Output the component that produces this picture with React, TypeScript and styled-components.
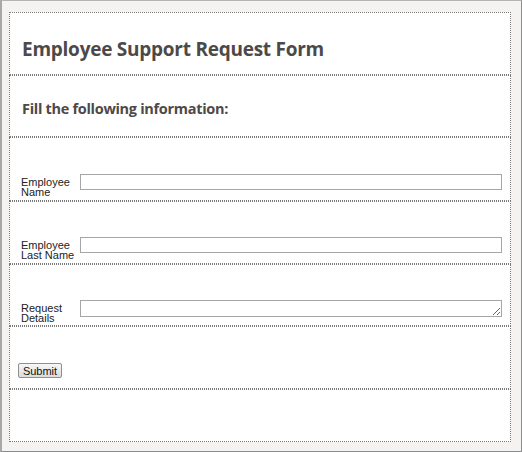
import styled, { createGlobalStyle } from 'styled-components';

const GlobalStyle = createGlobalStyle`
  html, body {
    margin: 0;
    padding: 0;
    background: #f4f3f1;
  }
`;

const Frame = styled.div`
  box-sizing: border-box;
  width: 522px;
  height: 452px;
  background: #f4f3f1;
  border-top: 1px solid #b4b4b4;
  border-left: 2px solid #a8a8a8;
  border-right: 1px solid #8c8c8c;
  border-bottom: 1px solid #8c8c8c;
  padding: 11px 10px 0 7px;
  font-family: 'Liberation Sans', Arial, sans-serif;
`;

const Panel = styled.form`
  display: flex;
  flex-direction: column;
  width: 502px;
  background: #fff;
  margin: 0;
`;

const Row = styled.div<{ $h: number; $pt: number; $pl?: number }>`
  box-sizing: border-box;
  height: ${(p) => p.$h}px;
  border: 1px dotted #7a7a7a;
  padding: ${(p) => p.$pt}px 0 0 ${(p) => p.$pl ?? 11}px;
`;

const Title = styled.h1`
  margin: 0;
  font-family: 'Open Sans', 'DejaVu Sans', sans-serif;
  font-weight: 700;
  font-size: 19px;
  letter-spacing: -0.25px;
  line-height: 24px;
  color: #4d4948;
  padding-left: 1px;
`;

const SubTitle = styled.h2`
  margin: 0;
  font-family: 'Open Sans', 'DejaVu Sans', sans-serif;
  font-weight: 700;
  font-size: 14.5px;
  letter-spacing: -0.3px;
  line-height: 20px;
  color: #4d4948;
  padding-left: 1px;
`;

const Field = styled.div`
  display: flex;
  align-items: flex-start;
`;

const Label = styled.label`
  width: 59px;
  margin-top: 3px;
  font-size: 11px;
  line-height: 10px;
  color: #222;
`;

const TextInput = styled.input`
  box-sizing: border-box;
  width: 422px;
  height: 16px;
  margin: 0;
  padding: 0 2px;
  border: 1px solid #a6a6a6;
  background: #fff;
  font: 11px 'Liberation Sans', Arial, sans-serif;
`;

const TextArea = styled.textarea`
  box-sizing: border-box;
  width: 422px;
  height: 17px;
  margin: 0;
  padding: 0 2px;
  border: 1px solid #a6a6a6;
  background: #fff;
  font: 11px 'Liberation Sans', Arial, sans-serif;
`;

const SubmitButton = styled.button`
  display: block;
  box-sizing: border-box;
  width: 44px;
  height: 15px;
  padding: 0;
  border: 1px solid #8e8e8e;
  border-radius: 2px;
  background: linear-gradient(#f7f7f7, #dcdcdc);
  font: 11px 'Liberation Sans', Arial, sans-serif;
  line-height: 12px;
  color: #111;
`;

export default function App() {
  return (
    <>
      <GlobalStyle />
      <Frame>
        <Panel onSubmit={(e) => e.preventDefault()}>
          <Row $h={63} $pt={24}>
            <Title>Employee Support Request Form</Title>
          </Row>
          <Row $h={62} $pt={23}>
            <SubTitle>Fill the following information:</SubTitle>
          </Row>
          <Row $h={64} $pt={36}>
            <Field>
              <Label>Employee Name</Label>
              <TextInput type="text" />
            </Field>
          </Row>
          <Row $h={63} $pt={35}>
            <Field>
              <Label>Employee Last Name</Label>
              <TextInput type="text" />
            </Field>
          </Row>
          <Row $h={62} $pt={35}>
            <Field>
              <Label>Request Details</Label>
              <TextArea />
            </Field>
          </Row>
          <Row $h={63} $pt={36} $pl={8}>
            <SubmitButton type="submit">Submit</SubmitButton>
          </Row>
          <Row $h={53} $pt={0} />
        </Panel>
      </Frame>
    </>
  );
}
